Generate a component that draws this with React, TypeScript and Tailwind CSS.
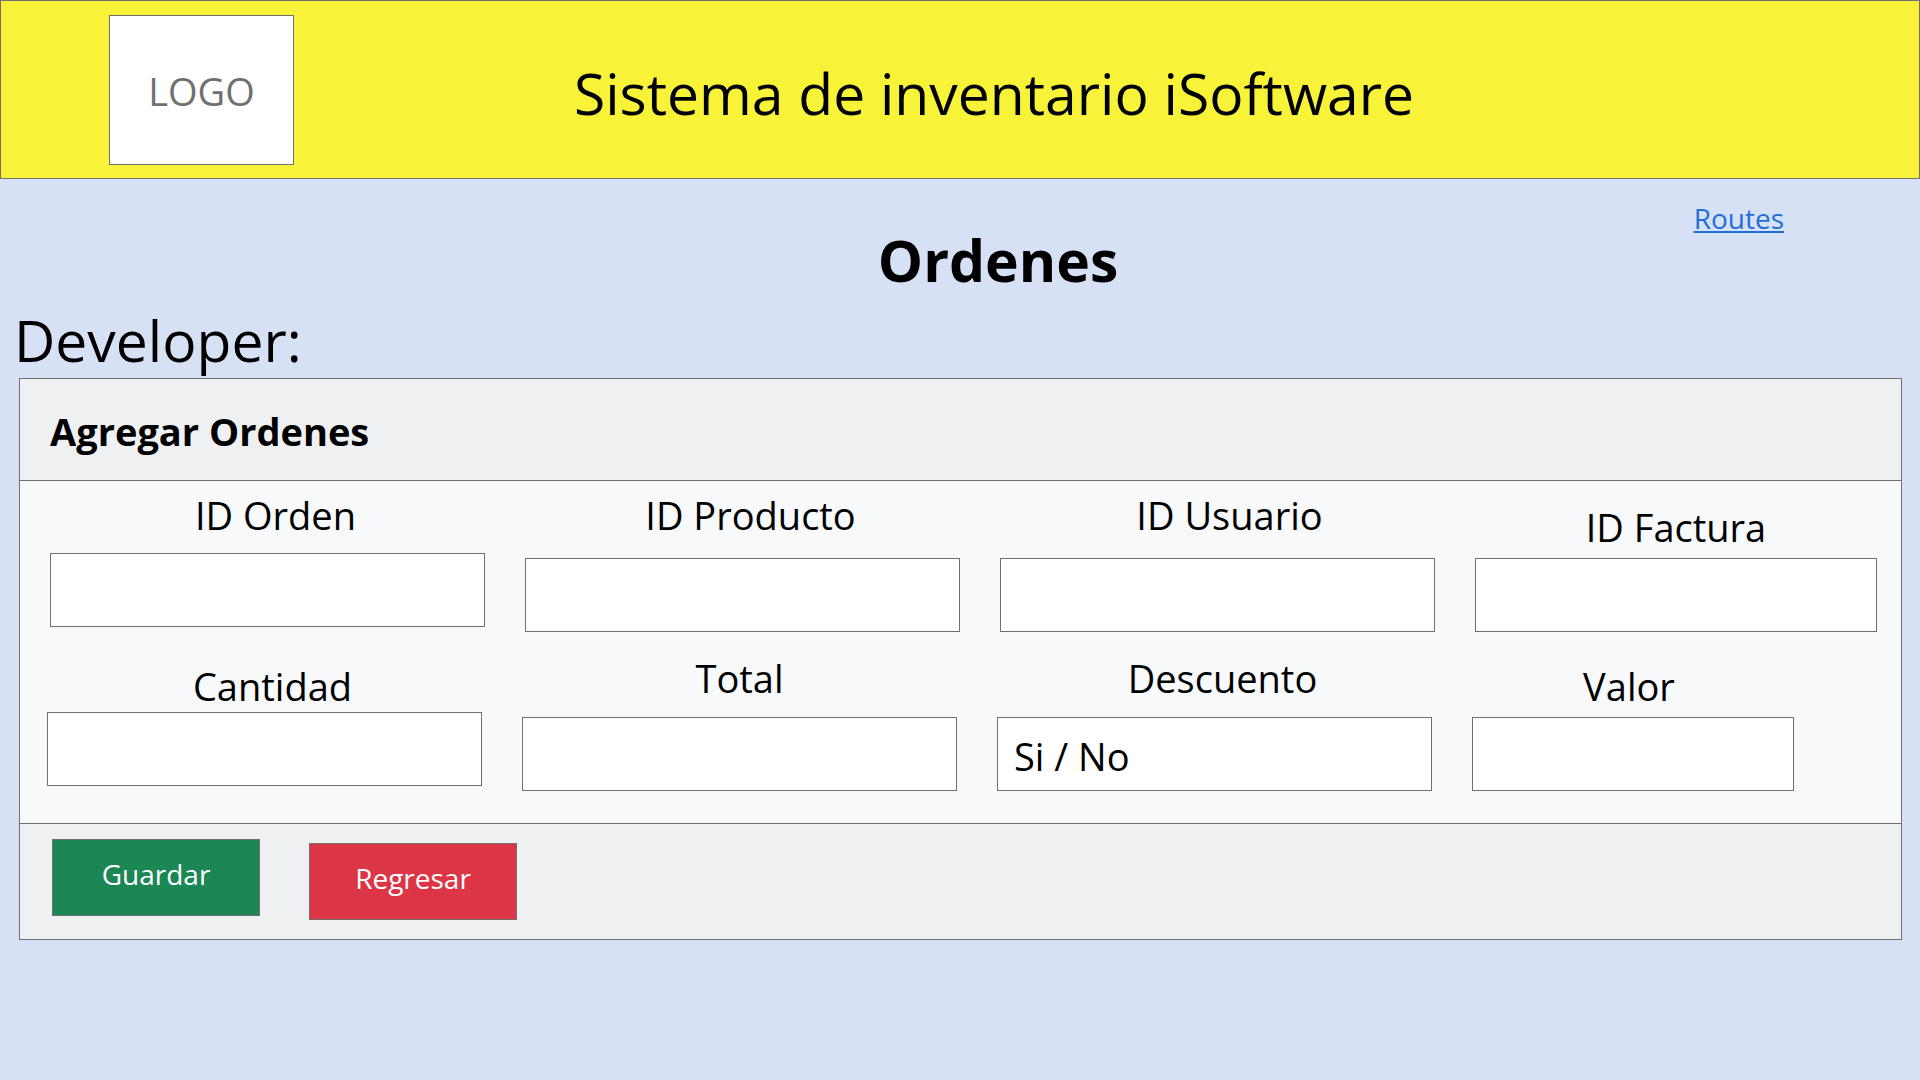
type FieldProps = {
  id: string;
  label: string;
  labelClass: string;
  value?: string;
};

const firstRow: FieldProps[] = [
  { id: 'id-orden', label: 'ID Orden', labelClass: 'mb-3.5 pl-4' },
  { id: 'id-producto', label: 'ID Producto', labelClass: 'mb-[19px] pl-4' },
  { id: 'id-usuario', label: 'ID Usuario', labelClass: 'mb-[19px] pl-6' },
  { id: 'id-factura', label: 'ID Factura', labelClass: 'mt-3 mb-[7px]' },
];

const secondRow: FieldProps[] = [
  { id: 'cantidad', label: 'Cantidad', labelClass: 'mt-2 mb-0.5 pl-4' },
  { id: 'total', label: 'Total', labelClass: 'mb-[15px]' },
  { id: 'descuento', label: 'Descuento', labelClass: 'mb-[15px] pl-4', value: 'Si / No' },
  { id: 'valor', label: 'Valor', labelClass: 'mt-2 mb-[7px] pr-2' },
];

function Field({ id, label, labelClass, value }: FieldProps) {
  return (
    <div className="flex min-w-0 flex-col">
      <label htmlFor={id} className={`text-center text-[38px] leading-[48px] ${labelClass}`}>
        {label}
      </label>
      <input
        id={id}
        type="text"
        defaultValue={value}
        className="h-[74px] w-full border border-[#707070] bg-white px-4 pt-1 text-[38px]"
      />
    </div>
  );
}

export default function App() {
  return (
    <div className="min-h-screen bg-[#d6e1f5] font-['Open_Sans','Noto_Sans',sans-serif] text-black">
      <header className="grid h-[179px] grid-cols-[1fr_auto_1fr] items-center border border-[#707070] bg-[#f8f338]">
        <div className="ml-27 flex h-[150px] w-[185px] items-center justify-center border border-[#707070] bg-white pt-1 text-[38px] text-[#707070]">
          LOGO
        </div>
        <p className="pt-1.5 pl-17 text-[57px] leading-[72px]">Sistema de inventario iSoftware</p>
      </header>

      <main>
        <div className="grid grid-cols-[1fr_auto_1fr] items-start">
          <h1 className="col-start-2 mt-[45px] pl-19 text-[57px] leading-[72px] font-bold">Ordenes</h1>
          <a
            href="#routes"
            className="mt-[19px] mr-34 justify-self-end text-[28px] leading-10 text-[#1f6fd6] underline decoration-2 underline-offset-2"
          >
            Routes
          </a>
        </div>
        <p className="mt-2 pl-3.5 text-[57px] leading-[72px]">Developer:</p>

        <form
          className="mt-0.5 mr-[18px] ml-[19px] border border-[#707070] bg-[#f8f9fb]"
          onSubmit={(e) => e.preventDefault()}
        >
          <h2 className="border-b border-[#707070] bg-[#eff0f2] px-[30px] pt-7 pb-6 text-[38px] leading-[49px] font-bold">
            Agregar Ordenes
          </h2>
          <div className="pt-2.5 pb-8">
            <div className="mb-[22px] grid grid-cols-[435fr_435fr_435fr_402fr] gap-10 pr-6 pl-[30px]">
              {firstRow.map((f) => (
                <Field key={f.id} {...f} />
              ))}
            </div>
            <div className="grid grid-cols-[435fr_435fr_435fr_322fr] gap-10 pr-[107px] pl-[27px]">
              {secondRow.map((f) => (
                <Field key={f.id} {...f} />
              ))}
            </div>
          </div>
          <div className="flex items-start gap-[49px] border-t border-[#707070] bg-[#eff0f2] px-8 pt-[15px] pb-[19px]">
            <button
              type="submit"
              className="h-[77px] w-[208px] border border-[#707070] bg-[#1a8754] pb-2 text-[28px] text-white"
            >
              Guardar
            </button>
            <button
              type="button"
              className="mt-1 h-[77px] w-[208px] border border-[#707070] bg-[#dc3545] pb-2 text-[28px] text-white"
            >
              Regresar
            </button>
          </div>
        </form>
      </main>
    </div>
  );
}
